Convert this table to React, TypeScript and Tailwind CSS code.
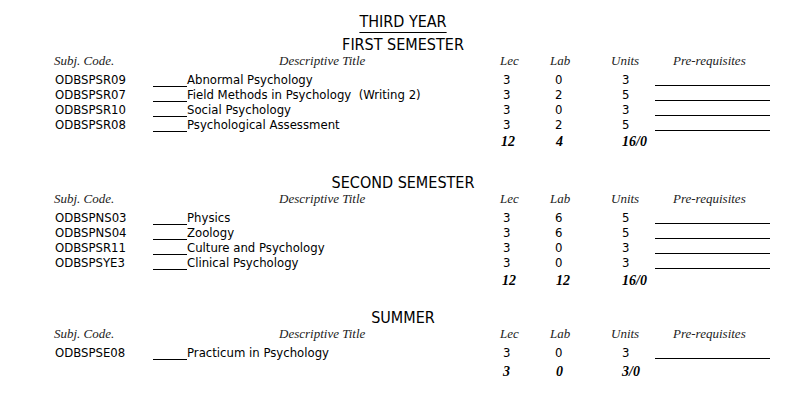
const sans = "font-['DejaVu_Sans_Condensed','DejaVu_Sans',sans-serif] [font-stretch:condensed]";
const serif = "font-['Liberation_Serif','Times_New_Roman',serif]";

type Course = { code: string; title: string; lec: string; lab: string; units: string };

const sections: {
  title: string;
  top: string;
  totalGap: string;
  courses: Course[];
  totals: [string, string, string];
  totalPad: [string, string];
}[] = [
  {
    title: "FIRST SEMESTER",
    top: "mt-[6px]",
    totalGap: "mt-[2px]",
    courses: [
      { code: "ODBSPSR09", title: "Abnormal Psychology", lec: "3", lab: "0", units: "3" },
      { code: "ODBSPSR07", title: "Field Methods in Psychology  (Writing 2)", lec: "3", lab: "2", units: "5" },
      { code: "ODBSPSR10", title: "Social Psychology", lec: "3", lab: "0", units: "3" },
      { code: "ODBSPSR08", title: "Psychological Assessment", lec: "3", lab: "2", units: "5" },
    ],
    totals: ["12", "4", "16/0"],
    totalPad: ["pl-[4px]", "pl-[9px]"],
  },
  {
    title: "SECOND SEMESTER",
    top: "mt-[25px]",
    totalGap: "mt-[3px]",
    courses: [
      { code: "ODBSPNS03", title: "Physics", lec: "3", lab: "6", units: "5" },
      { code: "ODBSPNS04", title: "Zoology", lec: "3", lab: "6", units: "5" },
      { code: "ODBSPSR11", title: "Culture and Psychology", lec: "3", lab: "0", units: "3" },
      { code: "ODBSPSYE3", title: "Clinical Psychology", lec: "3", lab: "0", units: "3" },
    ],
    totals: ["12", "12", "16/0"],
    totalPad: ["pl-[5px]", "pl-[9px]"],
  },
  {
    title: "SUMMER",
    top: "mt-[21px]",
    totalGap: "mt-[4px]",
    courses: [{ code: "ODBSPSE08", title: "Practicum in Psychology", lec: "3", lab: "0", units: "3" }],
    totals: ["3", "0", "3/0"],
    totalPad: ["pl-[6px]", "pl-[9px]"],
  },
];

const cols = "grid grid-cols-[98px_344px_50px_58px_50px_115px] pl-[55px]";

function Section({ s }: { s: (typeof sections)[number] }) {
  return (
    <div className={s.top}>
      <div className={`${sans} h-[17px] pl-[7px] text-center text-[16px] leading-[17px]`}>{s.title}</div>

      {/* column heads */}
      <div className={`${cols} ${serif} h-[15px] text-[13px] italic leading-[15px] text-[#222]`}>
        <div className="-ml-[1px]">Subj. Code.</div>
        <div className="pl-[126px]">Descriptive Title</div>
        <div className="pl-[3px]">Lec</div>
        <div className="pl-[3px]">Lab</div>
        <div className="pl-[6px]">Units</div>
        <div className="pl-[18px]">Pre-requisites</div>
      </div>

      <div className="mt-[4px]">
        {s.courses.map((c) => (
          <div key={c.code} className={`${cols} ${sans} h-[15px] text-[13px] leading-[15px]`}>
            <div>{c.code}</div>
            <div className="whitespace-pre">
              <span className="inline-block w-[34px] border-b border-black align-[-3px]" />
              {c.title}
            </div>
            <div className="pl-[6px]">{c.lec}</div>
            <div className="pl-[8px]">{c.lab}</div>
            <div className="pl-[17px]">{c.units}</div>
            <div className="h-[14px] border-b border-black" />
          </div>
        ))}
      </div>

      <div className={`${cols} ${serif} ${s.totalGap} h-[15px] text-[14px] font-bold italic leading-[15px]`}>
        <div />
        <div />
        <div className={s.totalPad[0]}>{s.totals[0]}</div>
        <div className={s.totalPad[1]}>{s.totals[1]}</div>
        <div className="pl-[17px]">{s.totals[2]}</div>
        <div />
      </div>
    </div>
  );
}

export default function App() {
  return (
    <div className="h-[407px] w-[799px] overflow-hidden bg-white pt-[13px] text-black">
      <div className={`${sans} h-[17px] pl-[7px] text-center text-[16px] leading-[17px]`}>
        <span className="underline decoration-1 underline-offset-[5px]">THIRD YEAR</span>
      </div>
      {sections.map((s) => (
        <Section key={s.title} s={s} />
      ))}
    </div>
  );
}
